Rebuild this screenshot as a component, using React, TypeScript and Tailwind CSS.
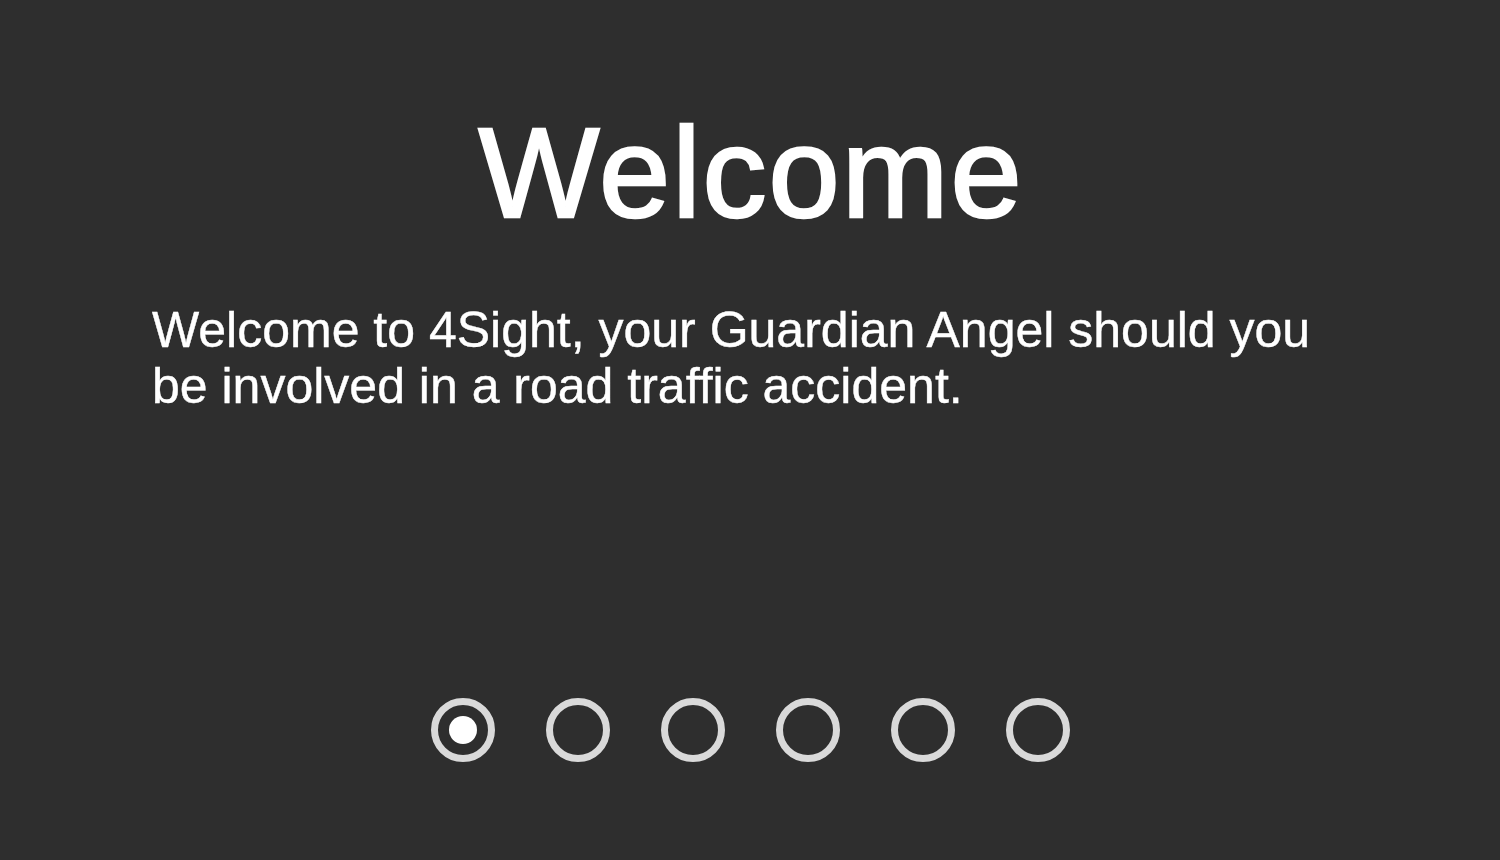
import React from "react";

export default function App() {
  const dots = [0, 1, 2, 3, 4, 5];
  return (
    <div
      className="w-[1500px] h-[860px] bg-[#2e2e2e] text-white flex flex-col items-center overflow-hidden"
      style={{ fontFamily: '"Liberation Sans", Arial, sans-serif' }}
    >
      <h1 className="mt-[98px] text-[128px] leading-[150px] font-normal tracking-[2px] pl-[2px] [-webkit-text-stroke:2.6px_white]">
        Welcome
      </h1>
      <p className="mt-[54px] self-start ml-[152px] w-[1200px] text-[50px] leading-[56px] [-webkit-text-stroke:0.4px_white]">
        Welcome to 4Sight, your Guardian Angel should you be involved in a road traffic accident.
      </p>
      <div className="mt-auto mb-[98px] flex gap-[51px]">
        {dots.map((i) => (
          <div
            key={i}
            className="w-[64px] h-[64px] rounded-full border-[7px] border-[#d9d9d9] flex items-center justify-center"
          >
            {i === 0 && <div className="w-[28px] h-[28px] rounded-full bg-white" />}
          </div>
        ))}
      </div>
    </div>
  );
}
